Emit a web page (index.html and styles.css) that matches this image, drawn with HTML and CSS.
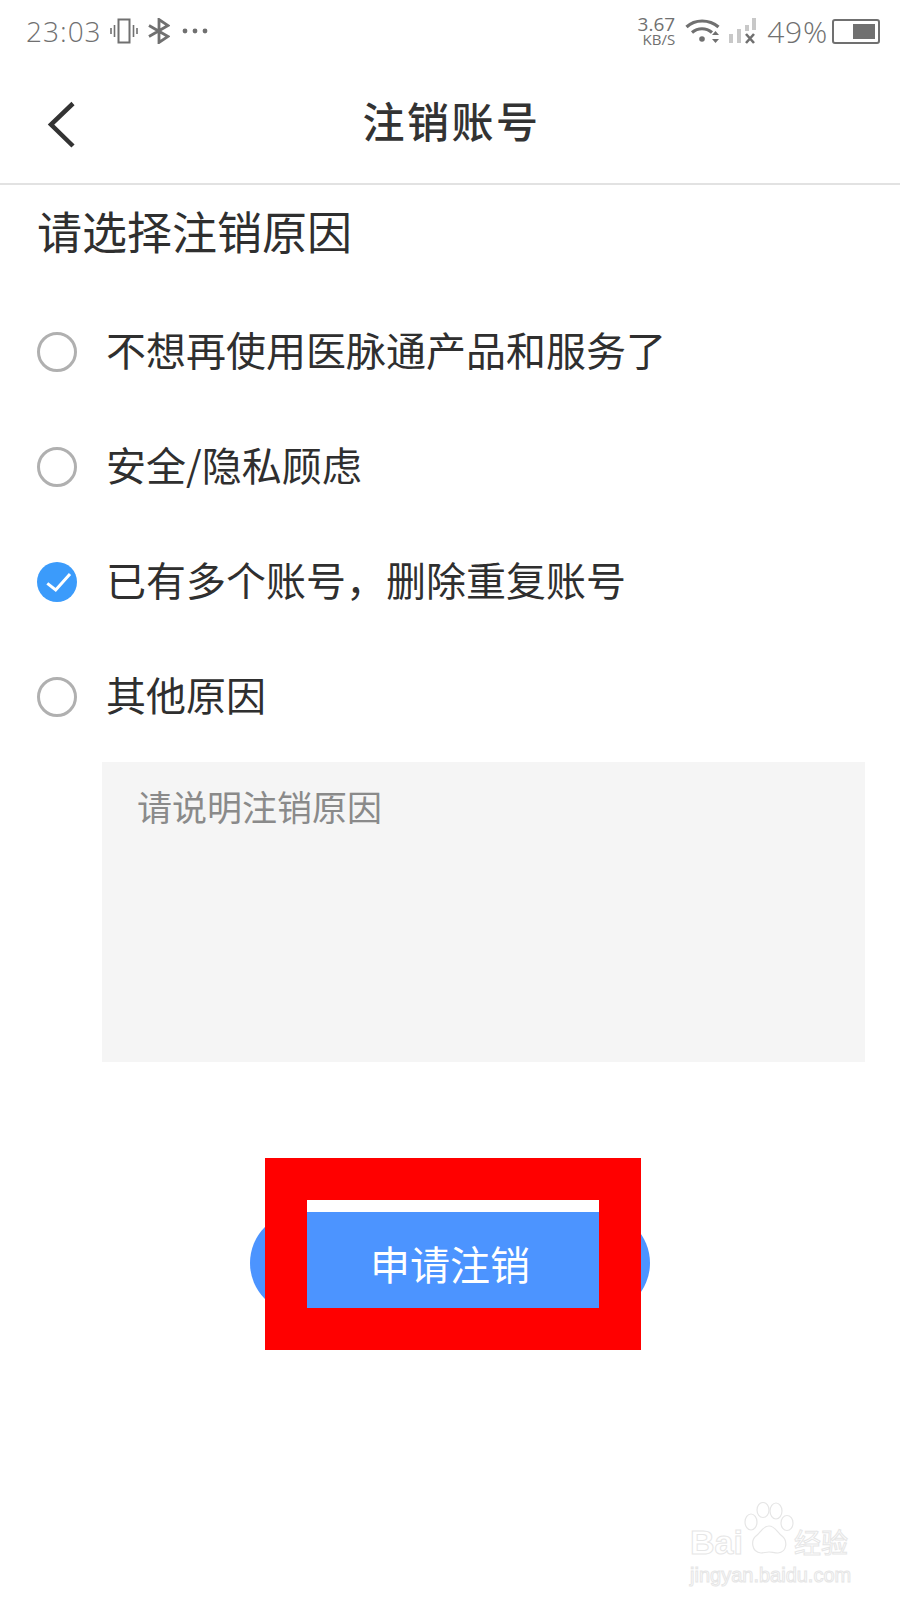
FILE: index.html
```html
<!DOCTYPE html>
<html lang="zh-CN">
<head>
    <meta charset="UTF-8">
    <meta name="viewport" content="width=device-width, initial-scale=1.0">
    <title>注销账号</title>
    <link rel="stylesheet" href="styles.css">
</head>
<body>
<div class="page">

    <div class="status">
        <div class="status-left">
            <span class="time">23:03</span>
            <svg class="ic-vibrate" width="28" height="26" viewBox="0 0 28 26" fill="none" stroke="#707070">
                <rect x="8.500" y="1.500" width="11" height="23" stroke-width="2"/>
                <path d="M4.500 7v12M1 10v6M23.500 7v12M27 10v6" stroke-width="1.600"/>
            </svg>
            <svg class="ic-bt" width="22" height="26" viewBox="0 0 22 26" fill="none" stroke="#707070" stroke-width="2.800">
                <path d="M1 7.500l19 11-9 6V1.500l9 6-19 11"/>
            </svg>
            <svg class="ic-dots" width="26" height="6" viewBox="0 0 26 6" fill="#707070">
                <circle cx="3" cy="3" r="2.400"/><circle cx="13" cy="3" r="2.400"/><circle cx="23" cy="3" r="2.400"/>
            </svg>
        </div>
        <div class="status-right">
            <div class="speed"><span>3.67</span><span class="speed-unit">KB/S</span></div>
            <svg class="ic-wifi" width="36" height="26" viewBox="0 0 36 26" fill="none" stroke="#707070" stroke-width="3.200">
                <path d="M1.500 9C10 1 24 1 33.500 9"/>
                <path d="M7 14.500c6-5 14-5 20 0"/>
                <circle cx="17" cy="21" r="2.800" fill="#707070" stroke="none"/>
                <path d="M30.500 13l3.500 4h-7zM30.500 25l3.500-4h-7z" fill="#707070" stroke="none"/>
            </svg>
            <svg class="ic-signal" width="28" height="26" viewBox="0 0 28 26">
                <rect x="0" y="16" width="4" height="9" fill="#c8c8c8"/>
                <rect x="8" y="11" width="4" height="14" fill="#c8c8c8"/>
                <rect x="16" y="7" width="4" height="6" fill="#c8c8c8"/>
                <rect x="23" y="0" width="4" height="12" fill="#c8c8c8"/>
                <path d="M17 16l8 9M25 16l-8 9" stroke="#707070" stroke-width="2.600"/>
            </svg>
            <span class="battery-pct">49%</span>
            <div class="battery"><div class="battery-fill"></div></div>
        </div>
    </div>

    <div class="nav">
        <svg class="back" width="32" height="48" viewBox="0 0 32 48" fill="none" stroke="#333" stroke-width="4.500">
            <path d="M27 2.500L5 23.500 27 45"/>
        </svg>
        <h1 class="nav-title">注销账号</h1>
    </div>

    <h2 class="heading">请选择注销原因</h2>

    <ul class="reasons">
        <li class="reason"><span class="radio"></span><span class="reason-text">不想再使用医脉通产品和服务了</span></li>
        <li class="reason"><span class="radio"></span><span class="reason-text">安全/隐私顾虑</span></li>
        <li class="reason">
            <svg class="radio-on" width="40" height="40" viewBox="0 0 40 40">
                <circle cx="20" cy="20" r="20" fill="#3b9bfb"/>
                <path d="M10.300 21.300l8.400 6.700L33 12" fill="none" stroke="#fff" stroke-width="3"/>
            </svg>
            <span class="reason-text">已有多个账号，删除重复账号</span>
        </li>
        <li class="reason"><span class="radio"></span><span class="reason-text">其他原因</span></li>
    </ul>

    <div class="remark">请说明注销原因</div>

    <div class="submit-wrap">
        <button class="submit">申请注销</button>
        <div class="mark"><div class="mark-strip"></div></div>
    </div>

    <div class="watermark">
        <div class="wm-row">
            <span class="wm-bai">Bai</span>
            <svg class="wm-paw" width="50" height="58" viewBox="0 0 50 58" fill="none" stroke="#e6e6e6" stroke-width="1.200">
                <ellipse cx="7" cy="20" rx="6" ry="8"/>
                <ellipse cx="19" cy="8" rx="6" ry="7.500"/>
                <ellipse cx="32" cy="9" rx="6" ry="8"/>
                <ellipse cx="43" cy="21" rx="6" ry="7.500"/>
                <path d="M25 24c-6 0-8 6-13 10-5 4-5 16 5 17 3 0 5-1 8-1s5 1 9 1c9-1 10-12 4-17-5-4-7-10-13-10z"/>
            </svg>
            <span class="wm-jy">经验</span>
        </div>
        <div class="wm-url">jingyan.baidu.com</div>
    </div>

</div>
</body>
</html>
```

FILE: styles.css
```css
body {
    margin: 0;
    background: #fff;
    font-family: "Noto Sans CJK SC", "Noto Sans", sans-serif;
    color: #333;
}
.page {
    position: relative;
    width: 900px;
    height: 1600px;
    overflow: hidden;
}

/* status bar */
.status {
    display: flex;
    justify-content: space-between;
    align-items: center;
    height: 62px;
    padding: 0 20px 0 26px;
    color: #707070;
}
.status-left, .status-right {
    display: flex;
    align-items: center;
}
.time {
    font-family: "Open Sans", sans-serif;
    font-weight: 300;
    font-size: 28px;
    letter-spacing: 1px;
    width: 84px;
}
.ic-bt {
    margin-left: 10px;
}
.ic-dots {
    margin-left: 12px;
}
.speed {
    display: flex;
    flex-direction: column;
    align-items: flex-end;
    font-family: "Open Sans", sans-serif;
    font-size: 19px;
    line-height: 17px;
}
.speed-unit {
    font-size: 15px;
    line-height: 13px;
}
.ic-wifi {
    margin-left: 10px;
}
.ic-signal {
    margin-left: 8px;
}
.battery-pct {
    font-family: "Open Sans", sans-serif;
    font-weight: 300;
    font-size: 30px;
    margin-left: 10px;
    letter-spacing: 0.800px;
}
.battery {
    display: flex;
    justify-content: flex-end;
    align-items: center;
    box-sizing: border-box;
    width: 48px;
    height: 25px;
    margin-left: 4px;
    padding: 3px;
    border: 2px solid #707070;
    border-radius: 3px;
}
.battery-fill {
    width: 22px;
    height: 15px;
    background: #707070;
}

/* nav */
.nav {
    position: relative;
    display: flex;
    align-items: center;
    justify-content: center;
    height: 121px;
    border-bottom: 2px solid #e2e2e2;
}
.back {
    position: absolute;
    left: 46px;
    top: 39px;
}
.nav-title {
    margin: 0 0 6px;
    padding-left: 3px;
    font-size: 42px;
    font-weight: 500;
    letter-spacing: 2.500px;
    color: #333;
}

.heading {
    margin: 18px 0 0 37px;
    font-size: 45px;
    line-height: 56px;
    font-weight: 400;
    color: #2f2f2f;
}

/* reasons */
.reasons {
    list-style: none;
    margin: 35px 0 0;
    padding: 0 0 0 37px;
}
.reason {
    display: flex;
    align-items: center;
    gap: 29px;
    height: 115px;
    font-size: 40px;
    color: #2f2f2f;
}
.reason-text {
    margin-bottom: 6px;
}
.radio {
    box-sizing: border-box;
    width: 40px;
    height: 40px;
    border: 3px solid #b0b0b0;
    border-radius: 50%;
}
.remark {
    box-sizing: border-box;
    height: 300px;
    margin: 8px 35px 0 102px;
    padding: 20px 35px;
    background: #f5f5f5;
    color: #8a8a8a;
    font-size: 35px;
    line-height: 48px;
}

/* submit button and its red annotation */
.submit-wrap {
    position: relative;
    display: flex;
    justify-content: center;
    margin-top: 150px;
}
.submit {
    width: 400px;
    height: 102px;
    border: none;
    border-radius: 51px;
    background: #4c94ff;
    color: #fff;
    font-family: inherit;
    font-size: 40px;
}
.mark {
    position: absolute;
    left: 265px;
    top: -54px;
    box-sizing: border-box;
    width: 376px;
    height: 192px;
    border: 42px solid #ff0000;
}
.mark-strip {
    height: 12px;
    background: #fff;
}

/* watermark */
.watermark {
    position: absolute;
    left: 690px;
    top: 1502px;
    width: 170px;
    color: transparent;
    -webkit-text-stroke: 1px #e6e6e6;
}
.wm-row {
    display: flex;
    align-items: flex-end;
    height: 58px;
}
.wm-bai {
    font-family: "Liberation Sans", sans-serif;
    font-size: 34px;
    font-weight: 700;
    line-height: 36px;
    width: 58px;
}
.wm-paw {
    flex: none;
    margin-left: -4px;
}
.wm-jy {
    font-size: 27px;
    line-height: 36px;
    white-space: nowrap;
}
.wm-url {
    font-family: "Liberation Sans", sans-serif;
    font-size: 20px;
    line-height: 30px;
    white-space: nowrap;
}
```
